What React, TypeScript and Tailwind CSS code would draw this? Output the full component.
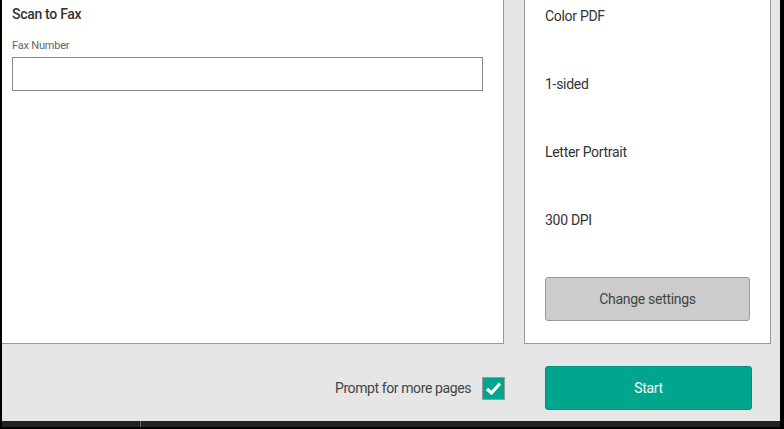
const font = { fontFamily: "Roboto, 'Noto Sans', sans-serif" };

const settings = ["Color PDF", "1-sided", "Letter Portrait", "300 DPI"];

export default function App() {
  return (
    <div className="flex h-[429px] w-[784px] flex-col bg-black" style={font}>
      <div className="ml-[2px] mr-[4px] flex flex-1 flex-col bg-[#e6e6e6]">
        {/* top panels */}
        <div className="flex h-[344px]">
          <div className="w-[502px] border-b border-r border-[#999] bg-white px-[10px] pt-[4px]">
            <h1 className="text-[14px] font-medium tracking-[-0.3px] text-[#333]">Scan to Fax</h1>
            <div className="mt-[13px] text-[11px] tracking-[-0.2px] text-[#666]">Fax Number</div>
            <input
              type="text"
              className="mt-[2px] h-[34px] w-[471px] border border-[#888] bg-white outline-none"
            />
          </div>
          <div className="ml-[20px] flex w-[247px] flex-col border-b border-l border-r border-[#999] bg-white pl-[20px]">
            <div className="flex flex-col gap-[48px] pt-[6px]">
              {settings.map((s) => (
                <div key={s} className="h-[20px] text-[14px] tracking-[-0.3px] text-[#333]">
                  {s}
                </div>
              ))}
            </div>
            <button className="mt-[47px] h-[44px] w-[205px] rounded-[3px] border border-[#999] bg-[#cccccc] text-[14px] tracking-[-0.3px] text-[#444]">
              Change settings
            </button>
          </div>
        </div>
        {/* bottom bar */}
        <div className="flex flex-1 items-center justify-end pr-[28px] pt-[11px]">
          <span className="text-[14px] tracking-[-0.4px] text-[#444]">Prompt for more pages</span>
          <span className="ml-[11px] flex h-[23px] w-[23px] items-center justify-center border border-[#999] bg-[#00a58e]">
            <svg width="17" height="15" viewBox="0 0 17 15">
              <path d="M2 8 L6.5 12 L15 2.5" fill="none" stroke="white" strokeWidth="3.2" />
            </svg>
          </span>
          <button className="ml-[40px] h-[44px] w-[207px] rounded-[3px] border border-[#00917b] bg-[#00a58e] text-[14px] tracking-[-0.3px] text-white">
            Start
          </button>
        </div>
      </div>
      <div className="ml-[2px] mr-[4px] flex h-[6px] bg-[#222]">
        <div className="w-[138px]" />
        <div className="w-[1px] bg-[#666]" />
      </div>
      <div className="h-[2px]" />
    </div>
  );
}
